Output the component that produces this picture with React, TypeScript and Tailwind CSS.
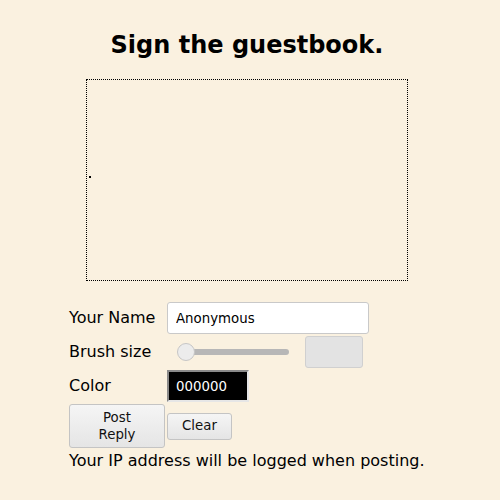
import React, { useState } from "react";

const font = { fontFamily: '"DejaVu Sans", sans-serif' };

export default function App() {
  const [name, setName] = useState("Anonymous");
  const [color, setColor] = useState("000000");

  return (
    <div
      className="min-h-[500px] w-[500px] bg-[#faf1e0] text-black"
      style={font}
    >
      <div className="w-[494px]">
        <h1 className="pt-[31px] text-center text-[24px] font-bold leading-[28px]">
          Sign the guestbook.
        </h1>

        <div className="mt-[20px] ml-[86px] relative h-[202px] w-[322px] border border-dotted border-black">
          {/* stray brush dot */}
          <div className="absolute left-[2px] top-[96px] h-[2px] w-[2px] bg-black" />
        </div>

        <div className="mt-[21px] ml-[69px] flex flex-col gap-[2px] text-[16px]">
          <div className="flex h-[32px] items-center">
            <span className="w-[98px]">Your Name</span>
            <input
              value={name}
              onChange={(e) => setName(e.target.value)}
              className="h-[32px] w-[202px] rounded-[3px] border border-[#c9c9c9] bg-white px-[8px] text-[13.33px] outline-none"
            />
          </div>

          <div className="flex h-[32px] items-center">
            <span className="w-[108px]">Brush size</span>
            <div className="relative flex h-[18px] w-[112px] items-center">
              <div className="ml-[4px] h-[6px] w-[108px] rounded-full bg-[#b7b7b7]" />
              <div className="absolute left-0 top-0 h-[18px] w-[18px] rounded-full border border-[#c6c6c6] bg-[#ececec]" />
            </div>
            <div className="ml-[16px] h-[32px] w-[58px] rounded-[3px] border border-[#d0d0d0] bg-[#e3e3e3]" />
          </div>

          <div className="flex h-[32px] items-center">
            <span className="w-[98px]">Color</span>
            <input
              value={color}
              onChange={(e) => setColor(e.target.value)}
              className="h-[32px] w-[82px] border-2 border-t-[#8a8a8a] border-l-[#8a8a8a] border-b-[#e6e6e6] border-r-[#e6e6e6] bg-black px-[7px] text-[13.33px] text-white outline-none"
            />
          </div>

          <div className="flex items-center gap-[2px]">
            <button className="h-[44px] w-[96px] rounded-[3px] border border-[#c4c4c4] bg-gradient-to-b from-[#f5f5f5] to-[#e5e5e5] text-[13.33px] leading-[17px] text-[#111]">
              Post
              <br />
              Reply
            </button>
            <button className="h-[27px] w-[65px] rounded-[3px] border border-[#c4c4c4] bg-gradient-to-b from-[#f5f5f5] to-[#e5e5e5] text-[13.33px] text-[#111]">
              Clear
            </button>
          </div>

          <p className="mt-[1px] leading-[19px]">
            Your IP address will be logged when posting.
          </p>
        </div>
      </div>
    </div>
  );
}
